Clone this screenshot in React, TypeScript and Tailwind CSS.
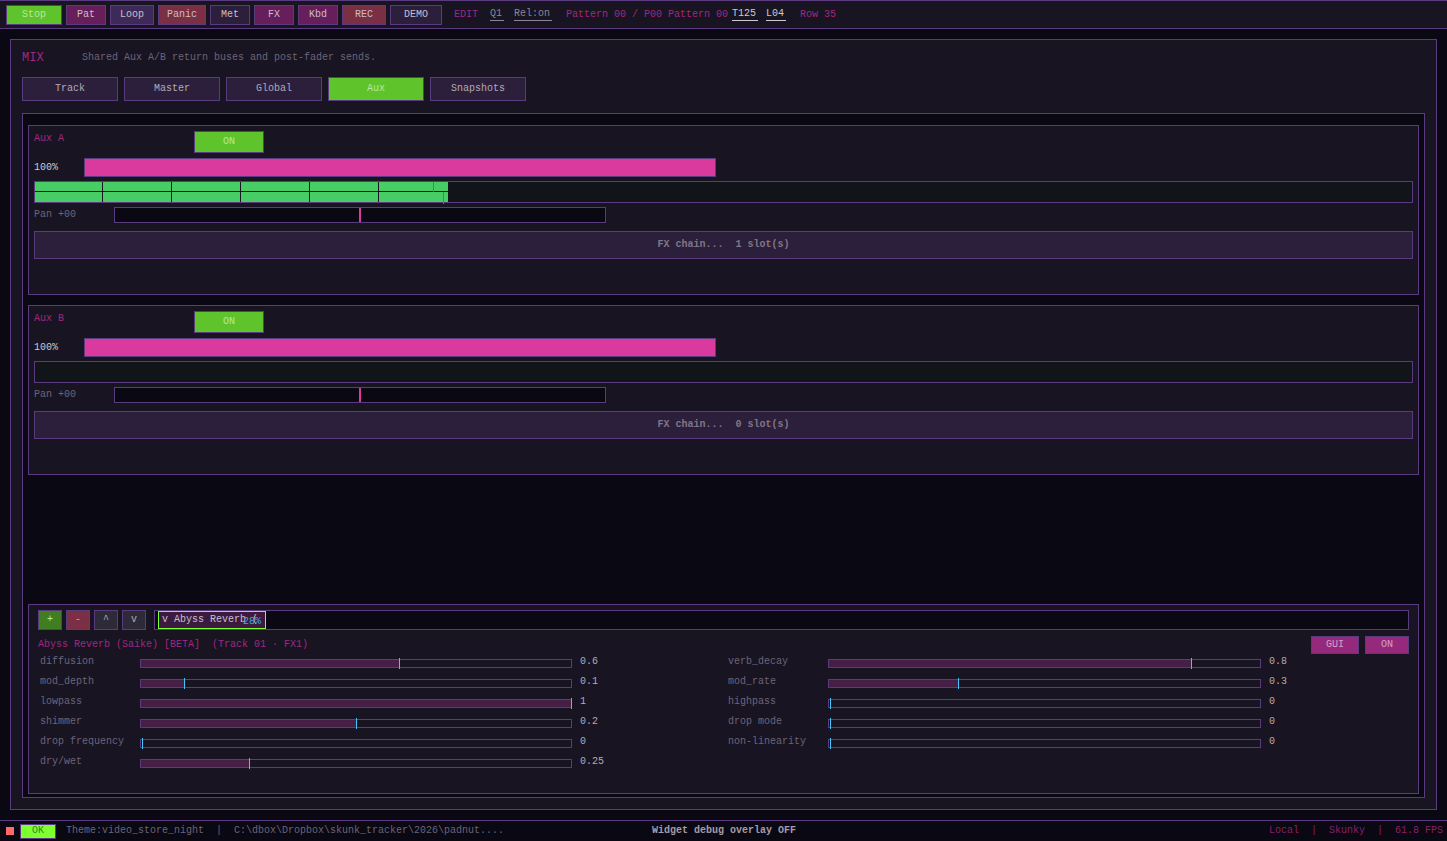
const mono = "font-['Liberation_Mono','DejaVu_Sans_Mono',monospace]";

type BarBtnProps = { label: string; w: string; bg: string; text?: string };

function BarBtn({ label, w, bg, text = "text-[#c9bfca]" }: BarBtnProps) {
  return (
    <div className={`flex h-[20px] items-center justify-center border border-[#5b3b80] ${w} ${bg} ${text}`}>
      {label}
    </div>
  );
}

function Tab({ label, active }: { label: string; active?: boolean }) {
  return (
    <div
      className={`flex h-[24px] w-[96px] items-center justify-center border border-[#5b3b80] ${
        active ? "bg-[#5fc42c] text-[#b9e6a0]" : "bg-[#2c1f3c] text-[#b3aab5]"
      }`}
    >
      {label}
    </div>
  );
}

function AuxPanel({ name, slots, meter }: { name: string; slots: number; meter: boolean }) {
  return (
    <div className="flex h-[170px] flex-col border border-[#5b3b80] bg-[#181422] px-[5px]">
      <div className="mt-[5px] flex h-[22px] items-start">
        <span className="mt-[2px] w-[160px] text-[#a2287e]">{name}</span>
        <div className="flex h-[22px] w-[70px] items-center justify-center border border-[#5b3b80] bg-[#5fc42c] text-[#b9e6a0]">
          ON
        </div>
      </div>
      <div className="mt-[5px] flex h-[19px] items-center">
        <span className="w-[50px] text-[#d0c8d0]">100%</span>
        <div className="h-[19px] w-[632px] border border-[#5b3b80] bg-[#da3a9e]" />
      </div>
      <div className="relative mt-[4px] h-[22px] border border-[#5b3b80] bg-[#111418]">
        {meter && (
          <>
            <div className="absolute left-0 top-0 h-full w-[413px] bg-[#48cc66]" />
            <div className="absolute left-0 top-[9px] h-[1px] w-[413px] bg-[#181422]" />
            <div className="absolute left-[67px] top-0 h-full w-[1px] bg-[#181422]" />
            <div className="absolute left-[136px] top-0 h-full w-[1px] bg-[#181422]" />
            <div className="absolute left-[205px] top-0 h-full w-[1px] bg-[#181422]" />
            <div className="absolute left-[274px] top-0 h-full w-[1px] bg-[#181422]" />
            <div className="absolute left-[343px] top-0 h-full w-[1px] bg-[#181422]" />
            <div className="absolute left-[398px] top-0 h-[10px] w-[1px] bg-[#b04a90]" />
            <div className="absolute left-[408px] top-[10px] h-[12px] w-[1px] bg-[#b04a90]" />
          </>
        )}
      </div>
      <div className="mt-[4px] flex h-[16px] items-center">
        <span className="w-[80px] text-[#6d6478]">Pan +00</span>
        <div className="relative h-[16px] w-[492px] border border-[#5b3b80] bg-[#0a0812]">
          <div className="absolute left-[244px] top-0 h-full w-[2px] bg-[#da3a9e]" />
        </div>
      </div>
      <div className="mt-[8px] flex h-[28px] items-center justify-center border border-[#5b3b80] bg-[#2c1f3c] font-bold text-[#807686]">
        <span className="whitespace-pre">{`FX chain...  ${slots} slot(s)`}</span>
      </div>
    </div>
  );
}

function Param({ label, pct, value, width }: { label: string; pct: number; value: string; width: string }) {
  return (
    <div className="flex h-[20px] items-center">
      <span className="ml-[2px] w-[100px] -translate-y-[1px] text-[#6d6478]">{label}</span>
      <div className={`relative h-[9px] border border-[#5b3b80] ${width}`}>
        <div className="h-full bg-[#451f45]" style={{ width: `${pct}%` }} />
        <div
          className="absolute top-[-2px] h-[11px] w-[1px] bg-[#45c4f5]"
          style={{ left: pct === 0 ? 1 : `${pct}%` }}
        />
      </div>
      <span className="ml-[8px] -translate-y-[1px] text-[#b3aab5]">{value}</span>
    </div>
  );
}

export default function App() {
  const left = [
    ["diffusion", 60, "0.6"],
    ["mod_depth", 10, "0.1"],
    ["lowpass", 100, "1"],
    ["shimmer", 50, "0.2"],
    ["drop frequency", 0, "0"],
    ["dry/wet", 25, "0.25"],
  ] as const;
  const right = [
    ["verb_decay", 84, "0.8"],
    ["mod_rate", 30, "0.3"],
    ["highpass", 0, "0"],
    ["drop mode", 0, "0"],
    ["non-linearity", 0, "0"],
  ] as const;

  return (
    <div className={`flex h-[841px] w-[1447px] flex-col overflow-hidden bg-[#0a0812] text-[10px] leading-[12px] ${mono}`}>
      {/* transport bar */}
      <div className="flex h-[29px] shrink-0 items-center gap-[4px] border-y border-[#5b3b80] bg-[#181422] pl-[6px]">
        <BarBtn label="Stop" w="w-[56px]" bg="bg-[#5fc42c]" text="text-[#b9e6a0]" />
        <BarBtn label="Pat" w="w-[40px]" bg="bg-[#661f5a]" />
        <BarBtn label="Loop" w="w-[44px]" bg="bg-[#3e2a58]" />
        <BarBtn label="Panic" w="w-[48px]" bg="bg-[#7a2f45]" />
        <BarBtn label="Met" w="w-[40px]" bg="bg-[#2c1f3c]" />
        <BarBtn label="FX" w="w-[40px]" bg="bg-[#661f5a]" />
        <BarBtn label="Kbd" w="w-[40px]" bg="bg-[#661f5a]" />
        <BarBtn label="REC" w="w-[44px]" bg="bg-[#7a2f45]" />
        <BarBtn label="DEMO" w="w-[52px]" bg="bg-[#2c1f3c]" />
        <span className="ml-[8px] w-[32px] text-[#a2287e]">EDIT</span>
        <span className="w-[14px] border-b border-[#8d8595] text-[#8d8595]">Q1</span>
        <span className="ml-[6px] w-[38px] border-b border-[#8d8595] text-[#8d8595]">Rel:on</span>
        <span className="ml-[10px] w-[164px] whitespace-pre text-[#a2287e]">Pattern 00 / P00 Pattern 00</span>
        <span className="ml-[-2px] w-[26px] border-b border-[#d0c8d0] text-[#d0c8d0]">T125</span>
        <span className="ml-[4px] w-[20px] border-b border-[#d0c8d0] text-[#d0c8d0]">L04</span>
        <span className="ml-[10px] text-[#a2287e]">Row 35</span>
      </div>

      {/* main mix panel */}
      <div className="mx-[10px] mt-[10px] flex h-[771px] flex-col border border-[#5b3b80] bg-[#181422] px-[11px]">
        <div className="mt-[11px] flex h-[14px] items-center">
          <span className="w-[60px] text-[12px] text-[#a2287e]">MIX</span>
          <span className="text-[#6d6478]">Shared Aux A/B return buses and post-fader sends.</span>
        </div>
        <div className="mt-[12px] flex gap-[6px]">
          <Tab label="Track" />
          <Tab label="Master" />
          <Tab label="Global" />
          <Tab label="Aux" active />
          <Tab label="Snapshots" />
        </div>

        <div className="mt-[12px] flex h-[685px] flex-col border border-[#5b3b80] bg-[#0a0812] px-[5px] pt-[11px]">
          <div className="flex flex-col gap-[10px]">
            <AuxPanel name="Aux A" slots={1} meter />
            <AuxPanel name="Aux B" slots={0} meter={false} />
          </div>

          {/* device panel */}
          <div className="mt-[129px] flex h-[190px] flex-col border border-[#5b3b80] bg-[#181422] pl-[9px] pr-[9px]">
            <div className="mt-[5px] flex h-[20px] items-stretch gap-[4px]">
              <div className="flex w-[24px] items-center justify-center border border-[#5b3b80] bg-[#3f7f22] text-[#b9e6a0]">+</div>
              <div className="flex w-[24px] items-center justify-center border border-[#5b3b80] bg-[#7a2f45] text-[#c9a0a8]">-</div>
              <div className="flex w-[24px] items-center justify-center border border-[#5b3b80] bg-[#2e2a3a] text-[#b3aab5]">^</div>
              <div className="flex w-[24px] items-center justify-center border border-[#5b3b80] bg-[#2e2a3a] text-[#b3aab5]">v</div>
              <div className="relative ml-[4px] flex-1 border border-[#5b3b80] bg-[#0a0812]">
                <div className="absolute left-[3px] top-0 flex h-[18px] w-[108px] items-center border border-[#80ff30] bg-[#3c1a40] pl-[3px] text-[#c9bfca]">
                  v Abyss Reverb (
                  <span className="absolute left-[84px] top-[4px] text-[#3fa8d8]">28%</span>
                </div>
              </div>
            </div>
            <div className="mt-[6px] flex h-[18px] items-center">
              <span className="whitespace-pre text-[#a2287e]">Abyss Reverb (Saike) [BETA]  (Track 01 · FX1)</span>
              <div className="ml-auto flex gap-[6px]">
                <div className="flex h-[18px] w-[48px] items-center justify-center border border-[#5b3b80] bg-[#952a7c] text-[#d8a0c8]">GUI</div>
                <div className="flex h-[18px] w-[44px] items-center justify-center border border-[#5b3b80] bg-[#952a7c] text-[#d8a0c8]">ON</div>
              </div>
            </div>
            <div className="mt-[-1px] flex">
              <div className="flex w-[688px] flex-col">
                {left.map(([l, p, v]) => (
                  <Param key={l} label={l} pct={p} value={v} width="w-[432px]" />
                ))}
              </div>
              <div className="flex flex-col">
                {right.map(([l, p, v]) => (
                  <Param key={l} label={l} pct={p} value={v} width="w-[433px]" />
                ))}
              </div>
            </div>
          </div>
        </div>
      </div>

      {/* status bar */}
      <div className="relative mt-[10px] flex h-[21px] shrink-0 items-center border-t border-[#5b3b80] bg-[#0a0812] pl-[6px] pr-[4px]">
        <div className="h-[8px] w-[8px] bg-[#ff6a6a]" />
        <div className="ml-[6px] flex h-[15px] w-[36px] items-center justify-center border border-[#5b3b80] bg-[#80ff30] text-[#2f8a2a]">OK</div>
        <span className="ml-[10px] whitespace-pre text-[#6d6478]">{"Theme:video_store_night  |  C:\\dbox\\Dropbox\\skunk_tracker\\2026\\padnut...."}</span>
        <span className="absolute left-[652px] font-bold text-[#a59cab]">Widget debug overlay OFF</span>
        <span className="ml-auto whitespace-pre text-[#8a1f6c]">{"Local  |  Skunky  |  61.8 FPS"}</span>
      </div>
    </div>
  );
}
